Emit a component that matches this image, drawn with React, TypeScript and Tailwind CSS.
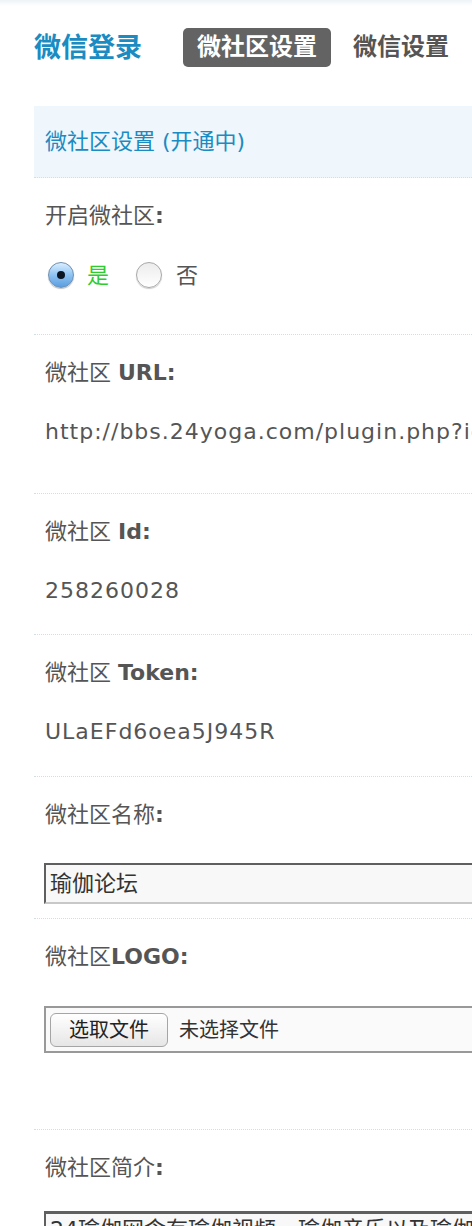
import type { ReactNode } from 'react'

const font = { fontFamily: '"DejaVu Sans", "Noto Sans CJK SC", sans-serif' }

function Row({ label, children, pb }: { label: ReactNode; children: ReactNode; pb: string }) {
  return (
    <div className={`border-b border-dotted border-[#cfdfea] pl-[11px] pt-[23px] ${pb}`}>
      <div className="h-[30px] leading-[30px] text-[22px] text-[#555]">{label}</div>
      {children}
    </div>
  )
}

function Value({ children }: { children: ReactNode }) {
  return (
    <div className="mt-[29px] h-[30px] leading-[30px] text-[22px] tracking-[1px] text-[#555] whitespace-nowrap">
      {children}
    </div>
  )
}

function Radio({ checked }: { checked?: boolean }) {
  if (checked) {
    return (
      <span className="flex h-[26px] w-[26px] items-center justify-center rounded-full border border-[#6f8fb0] bg-gradient-to-b from-[#dbeeff] via-[#8ec3f3] to-[#5a9de0] shadow-[0_1px_1px_rgba(0,0,0,0.25)]">
        <span className="h-[8px] w-[8px] rounded-full bg-[#0b1622]" />
      </span>
    )
  }
  return (
    <span className="block h-[26px] w-[26px] rounded-full border border-[#a8a8a8] bg-gradient-to-b from-[#ececec] to-white shadow-[0_1px_1px_rgba(0,0,0,0.2)]" />
  )
}

export default function App() {
  return (
    <div className="h-[1226px] w-[472px] overflow-hidden bg-white" style={font}>
      <div className="h-[6px] bg-gradient-to-b from-[#eef3f7] to-white" />
      <div className="w-[800px] pl-[34px]">
        {/* Top nav */}
        <div className="flex items-center pt-[22px]">
          <span className="text-[27px] font-bold text-[#1b8cc2] leading-[39px]">微信登录</span>
          <span className="ml-[41px] h-[39px] rounded-[5px] bg-[#636363] px-[14px] text-[24px] font-bold leading-[39px] text-white">
            微社区设置
          </span>
          <span className="ml-[22px] text-[24px] font-bold leading-[39px] text-[#555]">微信设置</span>
        </div>

        {/* Section header */}
        <div className="mt-[39px] h-[72px] border-b border-dotted border-[#cfdfea] bg-[#eff6fc] pl-[11px] text-[22px] leading-[71px] text-[#1b8cc2]">
          微社区设置 (开通中)
        </div>

        <Row label={<>开启微社区<b>:</b></>} pb="pb-[44px]">
          <div className="mt-[29px] flex h-[30px] items-center text-[22px]">
            <span className="ml-[3px]"><Radio checked /></span>
            <span className="ml-[13px] text-[#2ecc2e]">是</span>
            <span className="ml-[27px]"><Radio /></span>
            <span className="ml-[14px] text-[#555]">否</span>
          </div>
        </Row>

        <Row label={<>微社区 <b>URL:</b></>} pb="pb-[46px]">
          <Value>http://bbs.24yoga.com/plugin.php?id=wechat:access</Value>
        </Row>

        <Row label={<>微社区 <b>Id:</b></>} pb="pb-[28px]">
          <Value>258260028</Value>
        </Row>

        <Row label={<>微社区 <b>Token:</b></>} pb="pb-[29px]">
          <Value>ULaEFd6oea5J945R</Value>
        </Row>

        <Row label={<>微社区名称<b>:</b></>} pb="pb-[14px]">
          <div className="ml-[-1px] mt-[33px] flex h-[41px] items-center border-2 border-t-[#5f5f5f] border-l-[#5f5f5f] border-r-[#c8c8c8] border-b-[#c8c8c8] bg-[#f8f8f8] pl-[4px] text-[22px] text-[#333]">
            瑜伽论坛
          </div>
        </Row>

        <Row label={<>微社区<b>LOGO:</b></>} pb="pb-[76px]">
          <div className="ml-[-1px] mt-[34px] flex h-[47px] items-center border-2 border-[#999] bg-[#fafafa] pl-[4px] text-[20px]">
            <span className="flex h-[34px] w-[118px] items-center justify-center rounded-[6px] border border-[#a5a5a5] bg-gradient-to-b from-white to-[#e6e6e6] text-[#222]">
              选取文件
            </span>
            <span className="ml-[11px] text-[#333]">未选择文件</span>
          </div>
        </Row>

        <div className="pl-[11px] pt-[23px]">
          <div className="h-[30px] leading-[30px] text-[22px] text-[#555]">微社区简介<b>:</b></div>
          <div className="ml-[-1px] mt-[28px] h-[60px] border-2 border-t-[3px] border-t-[#5f5f5f] border-l-[#5f5f5f] border-r-[#c8c8c8] border-b-[#c8c8c8] bg-[#f8f8f8] pl-[4px] pt-[2px] text-[22px] leading-[28px] text-[#333] whitespace-nowrap">
            24瑜伽网含有瑜伽视频，瑜伽音乐以及瑜伽体式等
          </div>
        </div>
      </div>
    </div>
  )
}
